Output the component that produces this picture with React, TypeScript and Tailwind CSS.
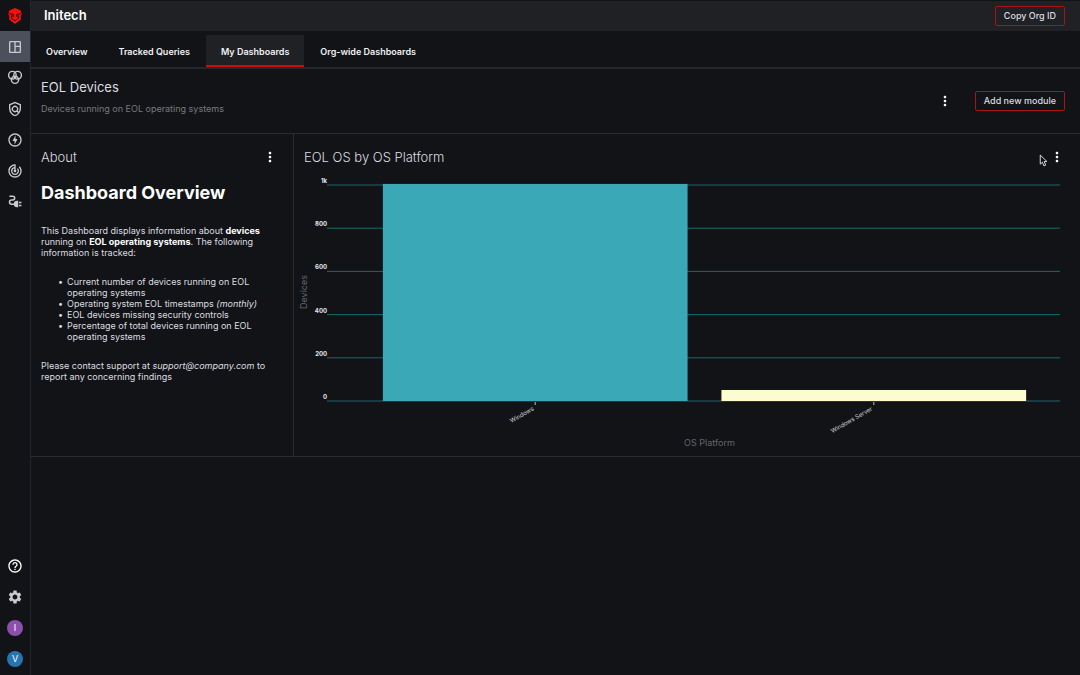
import type { ReactNode } from "react";
import {
  MdHelpOutline,
  MdMoreVert,
  MdOutlineOfflineBolt,
  MdOutlinePolicy,
  MdOutlineSpaceDashboard,
  MdSettings,
  MdTrackChanges,
} from "react-icons/md";

const tabs = ["Overview", "Tracked Queries", "My Dashboards", "Org-wide Dashboards"];
const activeTab = "My Dashboards";

const bars = [
  { label: "Windows", value: 1005, color: "#3ba8b8" },
  { label: "Windows Server", value: 51, color: "#fdfcd0" },
];
const ticks = [0, 200, 400, 600, 800, 1000];

function Logo() {
  return (
    <svg width="16" height="18" viewBox="0 0 16 18" fill="none">
      <path d="M8 1 L13.6 3.6 L14.8 7.4 L13.8 8 V12.6 L8 17 L2.2 12.6 V8 L1.2 7.4 L2.4 3.6 Z" fill="#f5100f" />
      <path d="M2.4 6.6 L6.4 7.4 V9.4 L4.4 8.6 V11 L8 13.8 L11.6 11 V8.6 L9.6 9.4 V7.4 L13.6 6.6" stroke="#3c0507" strokeWidth="1" />
    </svg>
  );
}

function RingsIcon() {
  return (
    <svg width="16" height="16" viewBox="0 0 16 16" fill="none" stroke="currentColor" strokeWidth="1.4">
      <circle cx="5.4" cy="5.2" r="3.8" />
      <circle cx="10.6" cy="5.2" r="3.8" />
      <circle cx="8" cy="9.8" r="3.6" />
    </svg>
  );
}

function PlugIcon() {
  return (
    <svg width="16" height="16" viewBox="0 0 16 16" fill="none" stroke="currentColor" strokeWidth="1.5">
      <path d="M2.4 2.2 H5.8 A1.9 1.9 0 0 1 5.8 6 H4.6 A2.1 2.1 0 0 0 4.6 10.2 H8" />
      <path d="M11.2 6.8 V13.2 H10 A3.2 3.2 0 0 1 10 6.8 Z" fill="currentColor" stroke="none" />
      <path d="M12 8.6 H14.4 M12 11.6 H14.4" />
    </svg>
  );
}

function NavButton({ label, active, children }: { label: string; active?: boolean; children: ReactNode }) {
  return (
    <button
      aria-label={label}
      className={`flex h-[31px] w-full items-center justify-center text-[#c9cacd] ${active ? "bg-[#4b505d]" : ""}`}
    >
      {children}
    </button>
  );
}

function MenuButton({ label }: { label: string }) {
  return (
    <button aria-label={label} className="flex h-5 w-4 items-center justify-center text-white">
      <MdMoreVert size={16} />
    </button>
  );
}

function OutlineButton({ children }: { children: ReactNode }) {
  return (
    <button className="h-5 rounded-xs border border-[#ab1215] px-2 text-[9px] font-medium text-[#dcdde0]">
      {children}
    </button>
  );
}

function Bullet({ children }: { children: ReactNode }) {
  return (
    <li className="flex gap-1 before:content-['•']">
      <span>{children}</span>
    </li>
  );
}

function BarChart() {
  const top = 10;
  const height = 216;
  const y = (v: number) => top + height - (v / 1000) * height;
  const step = 100 / 2.1;

  return (
    <div className="flex pr-5 pl-[55px]">
      <svg className="h-[276px] w-full overflow-visible" role="img" aria-label="EOL OS by OS Platform">
        {ticks.map((t) => (
          <g key={t}>
            <line x1="-22" x2="100%" y1={y(t)} y2={y(t)} stroke="#156a6d" strokeWidth="1" />
            <text x="-22" y={y(t) - 2} textAnchor="end" fill="#e6e6e8" className="text-[6px] font-bold">
              {t === 1000 ? "1k" : t}
            </text>
          </g>
        ))}
        {bars.map((b, i) => (
          <g key={b.label}>
            <rect
              x={`${step * (i + 0.1)}%`}
              y={y(b.value)}
              width={`${step * 0.9}%`}
              height={y(0) - y(b.value)}
              fill={b.color}
            />
            <svg x={`${step * (i + 0.55)}%`} y={y(0)} className="overflow-visible">
              <line y1="1" y2="4" stroke="#b9babd" />
              <text
                transform="translate(-1 9) rotate(-30)"
                textAnchor="end"
                fill="#d0d1d4"
                className="text-[6px]"
              >
                {b.label}
              </text>
            </svg>
          </g>
        ))}
        <text transform="translate(-42 117) rotate(-90)" textAnchor="middle" fill="#63656b" className="text-[9px]">
          Devices
        </text>
        <text x="50.7%" y="271" textAnchor="middle" fill="#63656b" className="text-[9px]">
          OS Platform
        </text>
      </svg>
    </div>
  );
}

function Cursor() {
  return (
    <svg width="9" height="13" viewBox="0 0 8 12" className="absolute top-5 right-8">
      <path d="M1 1 V9.4 L3 7.6 L4.4 11 L6 10.3 L4.6 7 H7.2 Z" fill="#111" stroke="#dedede" strokeWidth="0.9" />
    </svg>
  );
}

export default function App() {
  return (
    <div className="flex min-h-screen bg-[#121316] font-[Inter,sans-serif] text-[#dcdde0]">
      <nav className="flex w-[31px] shrink-0 flex-col border-r border-[#24262b] pb-px">
        <NavButton label="Home"><Logo /></NavButton>
        <NavButton label="Dashboards" active><MdOutlineSpaceDashboard size={16} /></NavButton>
        <NavButton label="Groups"><RingsIcon /></NavButton>
        <NavButton label="Policies"><MdOutlinePolicy size={16} /></NavButton>
        <NavButton label="Actions"><MdOutlineOfflineBolt size={16} /></NavButton>
        <NavButton label="Monitoring"><MdTrackChanges size={16} /></NavButton>
        <NavButton label="Integrations"><PlugIcon /></NavButton>
        <div className="mt-auto">
          <NavButton label="Help"><MdHelpOutline size={16} className="text-white" /></NavButton>
          <NavButton label="Settings"><MdSettings size={16} /></NavButton>
          <NavButton label="Organization">
            <span className="flex size-4 items-center justify-center rounded-full bg-[#8d4fae] text-[9px] text-white">I</span>
          </NavButton>
          <NavButton label="Account">
            <span className="flex size-4 items-center justify-center rounded-full bg-[#2475b0] text-[9px] text-white">V</span>
          </NavButton>
        </div>
      </nav>

      <main className="min-w-0 flex-1">
        <header className="flex h-[31px] items-center justify-between border-t border-[#121316] bg-[#202124] pr-[15px] pl-[13px]">
          <h1 className="text-[13px] font-semibold text-white">Initech</h1>
          <OutlineButton>Copy Org ID</OutlineButton>
        </header>

        <div role="tablist" className="flex h-[38px] items-end gap-px border-b-2 border-[#25272a]">
          {tabs.map((t) => (
            <button
              key={t}
              role="tab"
              aria-selected={t === activeTab}
              className={`h-8 border-b-2 px-[15px] pt-1 text-[9px] font-semibold text-[#f0f0f2] ${
                t === activeTab ? "border-[#d0090c] bg-[#202125]" : "border-transparent"
              }`}
            >
              {t}
            </button>
          ))}
        </div>

        <section className="flex h-[65px] items-center justify-between border-b border-[#2a2c30] pr-[15px] pl-[10px]">
          <div className="pb-2">
            <h2 className="text-[13px] leading-4">EOL Devices</h2>
            <p className="mt-2 text-[9px] leading-3 text-[#77797f]">Devices running on EOL operating systems</p>
          </div>
          <div className="flex items-center gap-[22px]">
            <MenuButton label="Dashboard options" />
            <OutlineButton>Add new module</OutlineButton>
          </div>
        </section>

        <div className="flex border-b border-[#2a2c30]">
          <section className="w-[263px] shrink-0 border-r border-[#2a2c30] px-[10px]">
            <div className="flex items-center justify-between pt-[13px] pr-[5px]">
              <h2 className="text-[13px] leading-5 font-light">About</h2>
              <MenuButton label="About options" />
            </div>
            <div className="pt-3 text-[9px] leading-[11px]">
              <h1 className="text-[18px] leading-7 font-bold text-white">Dashboard Overview</h1>
              <p className="mt-[18px]">
                This Dashboard displays information about <b className="text-white">devices</b> running on{" "}
                <b className="text-white">EOL operating systems</b>. The following information is tracked:
              </p>
              <ul className="my-[18px] pr-2 pl-[17px]">
                <Bullet>Current number of devices running on EOL operating systems</Bullet>
                <Bullet>Operating system EOL timestamps <i>(monthly)</i></Bullet>
                <Bullet>EOL devices missing security controls</Bullet>
                <Bullet>Percentage of total devices running on EOL operating systems</Bullet>
              </ul>
              <p>
                Please contact support at <i>support@company.com</i> to report any concerning findings
              </p>
            </div>
          </section>

          <section className="relative h-[322px] min-w-0 flex-1">
            <div className="flex items-center justify-between pt-[13px] pr-[15px] pl-[10px]">
              <h2 className="text-[13px] leading-5 font-light">EOL OS by OS Platform</h2>
              <MenuButton label="Module options" />
            </div>
            <Cursor />
            <div className="pt-2">
              <BarChart />
            </div>
          </section>
        </div>
      </main>
    </div>
  );
}
